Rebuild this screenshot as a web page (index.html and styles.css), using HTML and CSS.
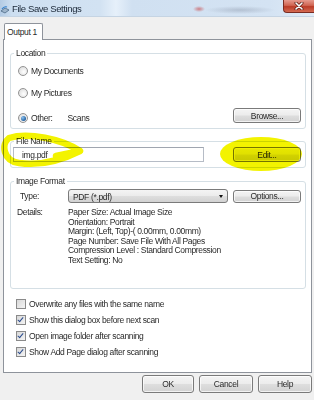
FILE: index.html
```html
<!DOCTYPE html>
<html lang="en">
<head>
    <meta charset="utf-8">
    <title>File Save Settings</title>
    <link rel="stylesheet" href="styles.css">
</head>
<body>
<div class="window">

    <div class="titlebar">
        <svg class="app-icon" width="10" height="10" viewBox="0 0 10 10">
            <path d="M1 6 L5 3 L9 5 L5 8 Z" fill="#9fb6cc" stroke="#4d6a86" stroke-width="0.8"/>
            <path d="M2 4 Q4 1 7 2" fill="none" stroke="#2f7fcf" stroke-width="1.2"/>
        </svg>
        <span class="title">File Save Settings</span>
        <div class="close">
            <svg width="10" height="8" viewBox="0 0 10 8">
                <path d="M2 1 L8 7 M8 1 L2 7" stroke="#5a1a12" stroke-width="3" stroke-linecap="round"/>
                <path d="M2 1 L8 7 M8 1 L2 7" stroke="#fff" stroke-width="1.6" stroke-linecap="round"/>
            </svg>
        </div>
    </div>

    <div class="client">
        <div class="tabs"><div class="tab">Output 1</div></div>

        <div class="panel">

            <fieldset class="group">
                <legend>Location</legend>
                <div class="group-body location">
                    <div class="opt"><span class="radio"></span>My Documents</div>
                    <div class="opt second"><span class="radio"></span>My Pictures</div>
                    <div class="opt-row">
                        <div class="opt"><span class="radio on"></span>Other:<span class="folder">Scans</span></div>
                        <button class="btn">Browse...</button>
                    </div>
                </div>
            </fieldset>

            <fieldset class="group filename">
                <legend>File Name</legend>
                <div class="group-body row">
                    <div class="textbox">img.pdf</div>
                    <button class="btn">Edit...</button>
                </div>
            </fieldset>

            <fieldset class="group format">
                <legend>Image Format</legend>
                <div class="group-body">
                    <div class="row type-row">
                        <span class="label type-label">Type:</span>
                        <div class="combo">PDF (*.pdf)<span class="arrow"></span></div>
                        <button class="btn">Options...</button>
                    </div>
                    <div class="details">
                        <span class="label">Details:</span>
                        <div class="detail-lines">
                            <div>Paper Size: Actual Image Size</div>
                            <div>Orientation: Portrait</div>
                            <div>Margin: (Left, Top)-( 0.00mm, 0.00mm)</div>
                            <div>Page Number: Save File With All Pages</div>
                            <div>Compression Level : Standard Compression</div>
                            <div>Text Setting: No</div>
                        </div>
                    </div>
                </div>
            </fieldset>

            <div class="checks">
                <div class="check"><span class="box"></span>Overwrite any files with the same name</div>
                <div class="check"><span class="box on"></span>Show this dialog box before next scan</div>
                <div class="check"><span class="box on"></span>Open image folder after scanning</div>
                <div class="check"><span class="box on"></span>Show Add Page dialog after scanning</div>
            </div>
        </div>

        <div class="actions">
            <button class="btn ok">OK</button>
            <button class="btn">Cancel</button>
            <button class="btn">Help</button>
        </div>
    </div>

    <!-- highlighter marks drawn over the dialog -->
    <svg class="marker" width="314" height="400" viewBox="0 0 314 400">
        <path d="M80 151 C62 139 28 132 9 138 C1 144 3 161 19 163 C40 166 62 160 80 151 M56 156 L80 151"
              fill="none" stroke="#f3f300" stroke-width="6.5" stroke-linecap="round" stroke-linejoin="round"/>
        <ellipse cx="261" cy="154" rx="41" ry="17" fill="#f3f300"/>
    </svg>
</div>
</body>
</html>
```

FILE: styles.css
```css
body {
    margin: 0;
    font-family: "Liberation Sans", Arial, sans-serif;
    font-size: 8.5px;
    letter-spacing: -0.35px;
    color: #2a2a2a;
}

.window {
    position: relative;
    width: 314px;
    height: 400px;
    overflow: hidden;
    background: #f0f0f0;
}

/* title bar */
.titlebar {
    height: 17px;
    display: flex;
    align-items: center;
    background:
        radial-gradient(ellipse 6px 3px at 199px 9px, rgba(200, 60, 60, 0.6), transparent),
        radial-gradient(ellipse 35px 4px at 240px 10px, rgba(120, 130, 150, 0.35), transparent),
        linear-gradient(to right, #b3cbe4 0, #cddff1 12px, #d2e2f2 100px, #e6f0fa 116px, #d0e0f1 132px, #d4e3f3 270px, #e0ebf7 100%);
    border-bottom: 1px solid #c5d4e3;
    box-sizing: border-box;
}
.app-icon { margin-top: 3px; }
.title {
    margin-left: 2px;
    font-size: 9.5px;
    letter-spacing: -0.4px;
    color: #1b2838;
}
.close {
    margin-left: auto;
    align-self: flex-start;
    width: 30px;
    height: 12px;
    border: 1px solid #7a2c22;
    border-top: none;
    border-right: none;
    border-radius: 0 0 0 4px;
    background: linear-gradient(#e69a8e, #d06552 45%, #bb3b27 55%, #d46a52);
    display: flex;
    align-items: center;
    justify-content: center;
}

/* tab control */
.tabs {
    padding: 6px 0 0 4px;
    display: flex;
}
.tab {
    position: relative;
    z-index: 1;
    height: 17px;
    box-sizing: border-box;
    padding: 3px 4px 0 2px;
    margin-bottom: -1px;
    background: #fff;
    border: 1px solid #8e939b;
    border-bottom: none;
    border-radius: 2px 2px 0 0;
    width: 39px;
}
.panel {
    height: 334px;
    box-sizing: border-box;
    margin: 0 2px 0 3px;
    background: #fff;
    border: 1px solid #8e939b;
    padding-top: 8px;
}

/* group boxes */
.group {
    margin: 0 5px 0 6px;
    padding: 0;
    border: 1px solid #d5dfe5;
    border-radius: 3px;
}
.group legend {
    margin-left: 3px;
    padding: 0 2px;
    line-height: 10px;
}
.filename { margin-top: 7px; }
.format { margin-top: 8px; }

.group-body { padding: 0 4px 0 6px; }
.location { padding: 7px 4px 5px 7px; }
.filename .group-body { padding: 1px 4px 5px 2px; }
.format .group-body { padding: 3px 4px 22px 6px; }

.row, .opt-row {
    display: flex;
    align-items: center;
}
.opt {
    display: flex;
    align-items: center;
    height: 12px;
}
.second { margin-top: 10px; }
.opt-row {
    margin-top: 9px;
    height: 15px;
    align-items: flex-start;
}
.opt-row .opt { margin-top: 4px; }
.opt-row .btn, .row .btn { margin-left: auto; }
.folder { margin-left: 15px; }

.radio {
    width: 8px;
    height: 8px;
    margin-right: 3px;
    border: 1px solid #939393;
    border-radius: 50%;
    background: radial-gradient(circle at 60% 60%, #fff 0, #e6e6e6 60%, #cfcfcf 100%);
    display: flex;
    align-items: center;
    justify-content: center;
}
.radio.on::after {
    content: "";
    width: 5px;
    height: 5px;
    border-radius: 50%;
    background: radial-gradient(circle at 35% 35%, #8fc4f2, #1f5f9f 70%, #163f6c);
}

/* buttons and inputs */
.btn {
    font: inherit;
    letter-spacing: inherit;
    color: #2a2a2a;
    width: 68px;
    height: 15px;
    padding: 0;
    border: 1px solid #7a7a7a;
    border-radius: 3px;
    background: linear-gradient(#f4f4f4 0, #ececec 48%, #dedede 52%, #d2d2d2 100%);
    box-shadow: inset 0 0 0 1px rgba(255, 255, 255, 0.7);
}
.textbox {
    width: 191px;
    height: 15px;
    box-sizing: border-box;
    border: 1px solid #b6bcc6;
    border-top-color: #a0a6b0;
    padding: 2px 0 0 8px;
    background: #fff;
}

.type-row { height: 14px; }
.label {
    width: 51px;
    flex-shrink: 0;
}
.type-label { padding-left: 3px; width: 48px; }
.combo {
    position: relative;
    width: 160px;
    height: 14px;
    box-sizing: border-box;
    padding: 2px 0 0 4px;
    border: 1px solid #7a7a7a;
    border-radius: 3px;
    background: linear-gradient(#f4f4f4 0, #ececec 48%, #dedede 52%, #d2d2d2 100%);
}
.arrow {
    position: absolute;
    right: 4px;
    top: 5px;
    border-left: 2.5px solid transparent;
    border-right: 2.5px solid transparent;
    border-top: 3px solid #111;
}
.type-row .btn { height: 13px; }

.details {
    display: flex;
    margin-top: 5px;
    line-height: 9.6px;
}

/* check boxes under the groups */
.checks {
    margin-top: 7px;
    padding-left: 12px;
}
.check {
    height: 16px;
    display: flex;
    align-items: center;
}
.box {
    position: relative;
    width: 8px;
    height: 8px;
    margin-right: 3px;
    border: 1px solid #8a8a8a;
    background: linear-gradient(135deg, #d8d8d8, #f4f4f4);
}
.box.on::after {
    content: "";
    position: absolute;
    left: 2px;
    top: 0;
    width: 2px;
    height: 5px;
    border-right: 1.5px solid #2a4b8d;
    border-bottom: 1.5px solid #2a4b8d;
    transform: rotate(40deg);
}

/* dialog buttons */
.actions {
    display: flex;
    justify-content: flex-end;
    gap: 5px;
    margin-top: 2px;
    padding-right: 2px;
}
.actions .btn {
    width: 54px;
    height: 18px;
}
.actions .ok { width: 52px; }

/* yellow highlighter on top */
.marker {
    position: absolute;
    left: 0;
    top: 0;
    pointer-events: none;
    mix-blend-mode: multiply;
}
```
